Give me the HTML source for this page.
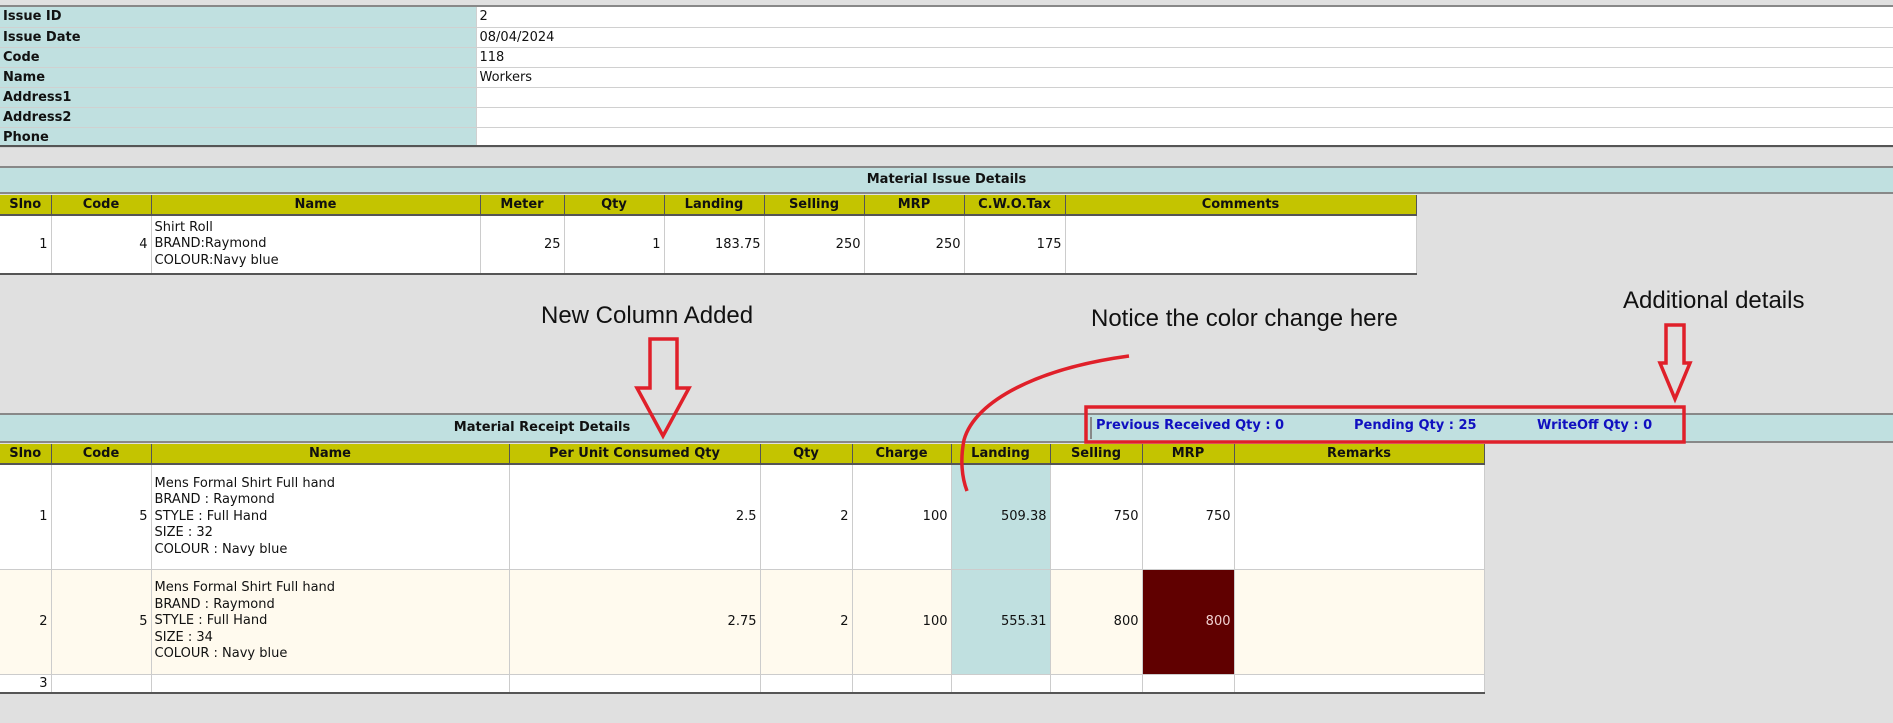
<!DOCTYPE html>
<html><head><meta charset="utf-8"><style>
*{margin:0;padding:0;box-sizing:border-box}
body{width:1893px;height:723px;background:#e0e0e0;font-family:"DejaVu Sans","Liberation Sans",sans-serif;font-size:13px;color:#111;position:relative;overflow:hidden}
.abs{position:absolute}
table{border-collapse:collapse;table-layout:fixed;position:absolute}
td{overflow:hidden;white-space:nowrap;padding:0 3px}
.top td{height:20px;border-bottom:1px solid #d0d0d0;line-height:19px}
.top td.l{background:#c0e0e0;font-weight:bold;border-right:1px solid #d0d0d0}
.top td.v{background:#fff}
.bar{position:absolute;left:0;width:1893px;background:#c0e0e0;border-top:2px solid #888;border-bottom:2px solid #888;font-weight:bold;text-align:center}
.g th{background:#c4c400;font-weight:bold;height:20px;border-right:1px solid #555;border-bottom:2px solid #555;font-size:13px;text-align:center;white-space:nowrap;overflow:hidden}
.g td{border-right:1px solid #ccc;border-bottom:1px solid #ccc;text-align:right;vertical-align:middle}
.g td.n{text-align:left;white-space:pre;line-height:16.5px}
.g{border-bottom:2px solid #555;border-right:1px solid #555}
.ann{position:absolute;font-family:"Liberation Sans",sans-serif;font-size:24px;color:#111;white-space:nowrap}
.blue{position:absolute;color:#1010c0;font-weight:bold;font-size:13px;top:418px}
</style></head><body>
<div class="abs" style="left:0;top:5px;width:1893px;height:2px;background:#888"></div>
<table class="top" style="left:0;top:7px;width:1893px">
<col style="width:476px"><col>
<tr><td class="l">Issue ID</td><td class="v">2</td></tr>
<tr><td class="l">Issue Date</td><td class="v">08/04/2024</td></tr>
<tr><td class="l">Code</td><td class="v">118</td></tr>
<tr><td class="l">Name</td><td class="v">Workers</td></tr>
<tr><td class="l">Address1</td><td class="v"></td></tr>
<tr><td class="l">Address2</td><td class="v"></td></tr>
<tr><td class="l">Phone</td><td class="v"></td></tr>
</table>
<div class="abs" style="left:0;top:145px;width:1893px;height:2px;background:#555"></div>

<div class="bar" style="top:166px;height:28px;line-height:24px">Material Issue Details</div>
<table class="g" style="left:0;top:195px;width:1416px">
<col style="width:51px"><col style="width:100px"><col style="width:329px"><col style="width:84px"><col style="width:100px"><col style="width:100px"><col style="width:100px"><col style="width:100px"><col style="width:101px"><col style="width:351px">
<tr><th>Slno</th><th>Code</th><th>Name</th><th>Meter</th><th>Qty</th><th>Landing</th><th>Selling</th><th>MRP</th><th>C.W.O.Tax</th><th>Comments</th></tr>
<tr style="background:#fff;height:59px"><td>1</td><td>4</td><td class="n">Shirt Roll
BRAND:Raymond
COLOUR:Navy blue</td><td>25</td><td>1</td><td>183.75</td><td>250</td><td>250</td><td>175</td><td></td></tr>
</table>

<div class="bar" style="top:413px;height:30px;line-height:26px;text-align:left"><span style="position:absolute;left:0;width:1084px;text-align:center">Material Receipt Details</span><span style="position:absolute;left:1090px;top:2px;height:22px;border-left:2px solid #888"></span></div>
<div class="blue" style="left:1096px">Previous Received Qty : 0</div>
<div class="blue" style="left:1354px">Pending Qty : 25</div>
<div class="blue" style="left:1537px">WriteOff Qty : 0</div>

<table class="g" style="left:0;top:444px;width:1484px">
<col style="width:51px"><col style="width:100px"><col style="width:358px"><col style="width:251px"><col style="width:92px"><col style="width:99px"><col style="width:99px"><col style="width:92px"><col style="width:92px"><col style="width:250px">
<tr><th>Slno</th><th>Code</th><th>Name</th><th>Per Unit Consumed Qty</th><th>Qty</th><th>Charge</th><th>Landing</th><th>Selling</th><th>MRP</th><th>Remarks</th></tr>
<tr style="background:#fff;height:105px"><td>1</td><td>5</td><td class="n">Mens Formal Shirt Full hand
BRAND : Raymond
STYLE : Full Hand
SIZE : 32
COLOUR : Navy blue</td><td>2.5</td><td>2</td><td>100</td><td style="background:#c0e0e0">509.38</td><td>750</td><td>750</td><td></td></tr>
<tr style="background:#fffaee;height:105px"><td>2</td><td>5</td><td class="n">Mens Formal Shirt Full hand
BRAND : Raymond
STYLE : Full Hand
SIZE : 34
COLOUR : Navy blue</td><td>2.75</td><td>2</td><td>100</td><td style="background:#c0e0e0">555.31</td><td>800</td><td style="background:#600000;color:#f0d0d0">800</td><td></td></tr>
<tr style="background:#fff;height:19px"><td>3</td><td></td><td></td><td></td><td></td><td></td><td style="background:#fff"></td><td></td><td></td><td></td></tr>
</table>

<div class="ann" style="left:541px;top:302px">New Column Added</div>
<div class="ann" style="left:1091px;top:305px">Notice the color change here</div>
<div class="ann" style="left:1623px;top:287px">Additional details</div>

<svg class="abs" style="left:0;top:0" width="1893" height="723">
<g fill="none" stroke="#e0202a" stroke-width="3.5" stroke-linejoin="miter">
<path d="M650 339 L677 339 L677 388 L689 388 L663 436 L637 388 L650 388 Z"/>
<path d="M1666 325 L1684 325 L1684 363 L1690 363 L1675 399 L1660 363 L1666 363 Z"/>
<path d="M1129 356 C1040 368 975 400 964 440 C960 460 962 478 967 491"/>
<rect x="1086" y="407" width="598" height="35"/>
</g>
</svg>
</body></html>
